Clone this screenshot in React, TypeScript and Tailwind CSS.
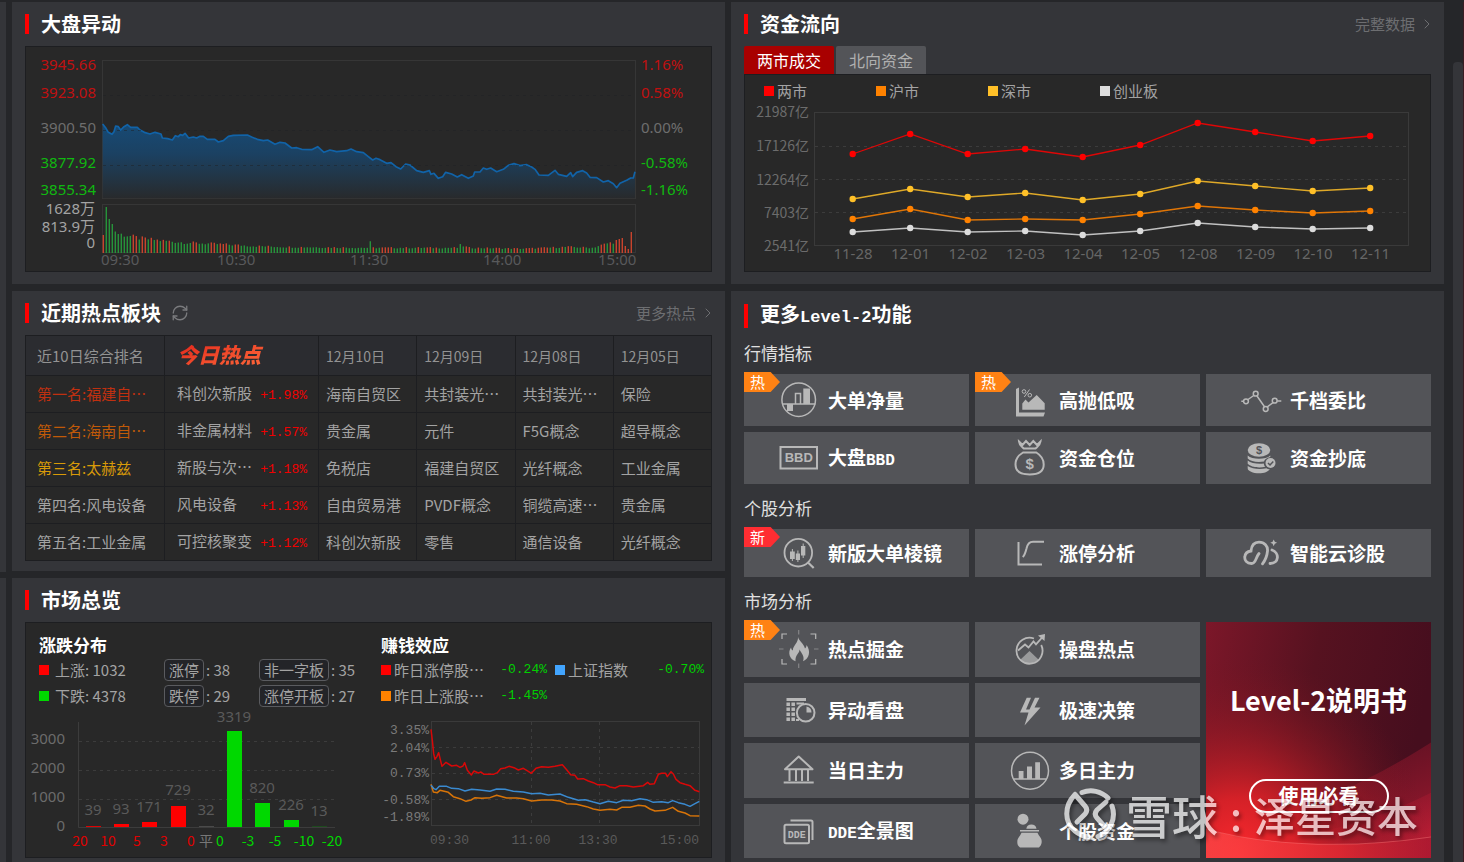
import { ReactNode } from "react";
import { ChevronRight, RefreshCw } from "lucide-react";

const NUM = "[font-family:'Noto_Sans','Noto_Sans_CJK_SC',sans-serif]";
const MONO = "[font-family:'Liberation_Mono','Noto_Sans_CJK_SC',monospace]";

// index curve, stored at triple resolution
const indexCurve =
  "308,372 318,385 325,397 336,403 342,395 347,378 355,380 362,390 372,380 382,374 392,382 412,382 420,390 433,397 450,402 465,397 483,402 487,414 503,416 517,420 526,407 535,410 541,404 548,406 555,400 566,414 580,411 590,414 600,409 610,409 622,418 645,418 655,426 670,422 685,409 700,406 742,405 755,411 772,418 790,422 803,420 825,433 840,427 855,429 875,444 890,443 905,448 935,449 953,440 972,457 990,450 1010,455 1040,452 1053,447 1070,455 1090,458 1105,470 1118,480 1128,475 1140,479 1160,490 1173,488 1188,500 1202,507 1217,492 1230,495 1250,512 1270,517 1288,512 1293,523 1302,520 1315,535 1328,530 1337,517 1355,522 1372,531 1385,524 1405,535 1420,528 1424,516 1440,516 1450,504 1460,508 1472,504 1490,515 1510,508 1525,496 1542,491 1560,497 1580,494 1595,501 1605,508 1617,525 1645,526 1665,511 1675,523 1700,529 1712,518 1718,530 1730,517 1748,512 1760,519 1770,532 1790,533 1810,546 1825,542 1840,551 1850,563 1860,550 1880,541 1892,534 1900,534 1905,515";

const redCurve =
  "213,472 217,505 221,545 225,562 231,553 236,542 241,563 246,583 258,571 275,582 290,580 300,586 309,582 314,572 322,595 334,609 342,597 355,603 363,600 372,607 400,607 412,602 422,590 435,588 447,583 462,587 475,594 490,589 505,598 514,604 528,589 545,584 565,586 585,583 607,578 620,593 632,608 645,610 653,621 670,620 685,627 700,632 712,638 735,638 750,645 765,648 780,641 800,641 820,645 850,641 863,631 870,637 883,635 895,607 905,604 917,604 922,614 933,599 940,606 948,622 960,632 975,637 990,641 1005,655 1018,659";
const blueCurve =
  "213,640 222,650 228,653 238,643 260,643 275,649 295,650 315,657 335,652 360,654 390,658 410,651 435,652 460,658 490,660 515,665 540,664 565,669 600,666 625,676 655,685 675,683 700,690 720,695 745,688 770,692 790,685 815,686 840,680 860,683 880,691 905,689 925,692 938,686 955,692 975,697 990,703 1005,695 1018,688";
const orangeCurve =
  "213,637 220,660 232,662 240,655 265,661 280,674 300,680 318,688 333,684 345,677 365,679 390,677 410,670 440,678 470,678 490,680 515,687 545,684 575,684 600,687 620,695 650,697 680,704 700,711 720,715 750,712 770,714 785,706 810,706 835,700 855,702 870,711 885,717 915,715 938,706 955,718 975,723 990,731 1018,732";

// volume envelope: [bar index, height]
const envelope = [
  [0, 18], [1, 46], [2, 34], [3, 29], [5, 22], [8, 20], [12, 17], [20, 14], [27, 12],
  [40, 10], [50, 8], [60, 7], [88, 6], [89, 12], [90, 6], [118, 6], [119, 9], [122, 6],
  [140, 5], [155, 7], [163, 6], [168, 11], [171, 13], [173, 15], [174, 7], [175, 4], [176, 21],
];

const volumes = Array.from({ length: 177 }, (_, i) => {
  const next = envelope.findIndex(([x]) => x >= i);
  const [x1, h1] = envelope[next];
  const [x0, h0] = envelope[Math.max(next - 1, 0)];
  const base = x1 === x0 ? h1 : h0 + ((h1 - h0) * (i - x0)) / (x1 - x0);
  const noise = Math.sin(i * 12.9898) * 43758.5453;
  const r = noise - Math.floor(noise);
  const up = i === 0 || i > 171 || (i > 6 && i !== 89 && i !== 119 && r > 0.58);
  return { h: base * (i < 4 || i > 170 ? 1 : 0.75 + r * 0.25), up };
});

const flowDates = ["11-28", "12-01", "12-02", "12-03", "12-04", "12-05", "12-08", "12-09", "12-10", "12-11"];
const flowSeries = [
  { name: "两市", color: "#ff0000", dot: "bg-[#ff0000]", y: [51, 31, 51, 46, 54, 42, 20, 29, 38, 33] },
  { name: "沪市", color: "#ff8200", dot: "bg-[#ff8200]", y: [116, 106, 117, 116, 117, 111, 103, 107, 110, 108] },
  { name: "深市", color: "#ffc028", dot: "bg-[#ffc028]", y: [96, 86, 94, 90, 97, 91, 78, 83, 88, 85] },
  { name: "创业板", color: "#dcdcdc", dot: "bg-[#dcdcdc]", y: [129, 125, 129, 128, 132, 128, 120, 124, 126, 125] },
];

const hotRows = [
  { rank: "第一名:福建自…", tone: "text-[#c03010]", name: "科创次新股", pct: "+1.98%", days: ["海南自贸区", "共封装光…", "共封装光…", "保险"] },
  { rank: "第二名:海南自…", tone: "text-[#c05a08]", name: "非金属材料", pct: "+1.57%", days: ["贵金属", "元件", "F5G概念", "超导概念"] },
  { rank: "第三名:太赫兹", tone: "text-[#d89a08]", name: "新股与次…", pct: "+1.18%", days: ["免税店", "福建自贸区", "光纤概念", "工业金属"] },
  { rank: "第四名:风电设备", tone: "", name: "风电设备", pct: "+1.13%", days: ["自由贸易港", "PVDF概念", "铜缆高速…", "贵金属"] },
  { rank: "第五名:工业金属", tone: "", name: "可控核聚变", pct: "+1.12%", days: ["科创次新股", "零售", "通信设备", "光纤概念"] },
];

const bars = [
  { v: 39, x: 67, h: 1, label: 103, fill: "#e00000" },
  { v: 93, x: 95, h: 3, label: 102, fill: "#ff0000" },
  { v: 171, x: 123, h: 5, label: 100, fill: "#ff0000" },
  { v: 729, x: 152, h: 21, label: 83, fill: "#ff0000" },
  { v: 32, x: 180, h: 1, label: 103, fill: "#4a4a4a" },
  { v: 3319, x: 208, h: 96, label: 10, fill: "#00d800" },
  { v: 820, x: 236, h: 24, label: 81, fill: "#00d800" },
  { v: 226, x: 265, h: 7, label: 98, fill: "#00d800" },
  { v: 13, x: 293, h: 1, label: 104, fill: "#1d4a1d" },
];
const barTicks: [string, number, string][] = [
  ["20", 54, "#e00000"], ["10", 82, "#e00000"], ["5", 111, "#e00000"], ["3", 138, "#e00000"],
  ["0", 165, "#e00000"], ["平", 180, "#777777"], ["0", 194, "#00d800"], ["-3", 222, "#00d800"],
  ["-5", 249, "#00d800"], ["-10", 278, "#00d800"], ["-20", 306, "#00d800"],
];

export default function App() {
  return (
    <main className="relative flex h-screen gap-1.5 overflow-hidden bg-[#252629] pt-0.5 text-[#a3a3a3] [font-family:'Noto_Sans_CJK_SC',sans-serif]">
      <div className="flex w-1.5 shrink-0 flex-col gap-1.5">
        <div className="h-[570px] bg-[#343539]" />
        <div className="flex-1 bg-[#343539]" />
      </div>
      <div className="grid flex-1 grid-cols-2 gap-1.5">
        <div className="flex min-w-0 flex-col gap-[7px]">
          <MarketMove />
          <HotSectors />
          <Overview />
        </div>
        <div className="flex min-w-0 flex-col gap-[7px]">
          <MoneyFlow />
          <LevelTwo />
        </div>
      </div>
      {/* scroll rail */}
      <div className="-ml-1.5 flex w-5 shrink-0 border-r border-[#3a1c22] pt-[60px] pl-[9px]">
        <div className="w-full rounded-t bg-[#343539]" />
      </div>
      <Watermark />
    </main>
  );
}

function Panel({ children, className = "pb-3" }: { children: ReactNode; className?: string }) {
  return <section className={`flex flex-col bg-[#343539] px-[13px] ${className}`}>{children}</section>;
}

function PanelHeader({ title, extra, link, tall }: { title: ReactNode; extra?: ReactNode; link?: string; tall?: boolean }) {
  return (
    <header className={`flex shrink-0 items-center ${tall ? "h-[50px]" : "h-11"}`}>
      <span className={`w-1 bg-[#ff0000] ${tall ? "h-6" : "h-5"}`} />
      <h2 className="ml-3 text-[20px] leading-6 font-bold text-white">{title}</h2>
      {extra}
      {link && (
        <a href="#" className="ml-auto flex items-center gap-1 text-[15px] leading-5 text-[#6d6e71]">
          {link}
          <ChevronRight size={16} strokeWidth={1.5} className="-mr-1" />
        </a>
      )}
    </header>
  );
}

function MarketMove() {
  const left: [string, number, string][] = [
    ["3945.66", 18, "#c01010"], ["3923.08", 46, "#c01010"], ["3900.50", 81, "#6e6e6e"],
    ["3877.92", 116, "#10b810"], ["3855.34", 143, "#10b810"],
  ];
  const right = ["1.16%", "0.58%", "0.00%", "-0.58%", "-1.16%"];
  const times: [string, number][] = [["09:30", 75], ["10:30", 191], ["11:30", 324], ["14:00", 457], ["15:00", 572]];
  return (
    <Panel>
      <PanelHeader title="大盘异动" />
      <div className="border border-[#1d1e21] bg-[#282828]">
        <svg viewBox="0 0 685 224" className={`block w-full text-[15px] ${NUM}`}>
          <defs>
            <linearGradient id="indexFill" x1="0" y1="0" x2="0" y2="1">
              <stop offset="0" stopColor="#174a75" />
              <stop offset="0.4" stopColor="#1b4162" />
              <stop offset="1" stopColor="#282a2c" />
            </linearGradient>
          </defs>
          <g fill="none" stroke="#363636">
            <rect x="76.5" y="13.5" width="533" height="138" />
            <rect x="76.5" y="157.5" width="533" height="48" />
          </g>
          <g transform="scale(0.33333) translate(-78 -141)">
            <polygon points={`308,595 ${indexCurve} 1905,595`} fill="url(#indexFill)" />
            <polyline points={indexCurve} fill="none" stroke="#1163a8" strokeWidth="5" strokeLinejoin="round" />
          </g>
          <g stroke="#1f2225" strokeDasharray="3 4">
            <path d="M77 48.5H609M77 83.5H609M77 118.5H609" opacity="0.5" />
          </g>
          {volumes.map((b, i) => (
            <rect key={i} x={76.6 + i * 3} y={206 - b.h} width={1.4} height={b.h} fill={b.up ? "#c8432c" : "#26933a"} />
          ))}
          {left.map(([t, y, c], i) => (
            <g key={t} fill={c}>
              <text x="70" y={y + 5} textAnchor="end">{t}</text>
              <text x="615" y={y + 5}>{right[i]}</text>
            </g>
          ))}
          <g fill="#a3a3a3" textAnchor="end">
            <text x="69" y="167">1628万</text>
            <text x="69" y="185">813.9万</text>
            <text x="69" y="201">0</text>
          </g>
          {times.map(([t, x]) => (
            <text key={t} x={x} y="218" fill="#58595b">{t}</text>
          ))}
        </svg>
      </div>
    </Panel>
  );
}

function MoneyFlow() {
  const axis: [string, number][] = [["21987亿", 9], ["17126亿", 43], ["12264亿", 77], ["7403亿", 110], ["2541亿", 143]];
  return (
    <Panel>
      <PanelHeader title="资金流向" link="完整数据" />
      <div className="flex gap-0.5">
        <button className="h-7 w-[90px] rounded-t-xs bg-[#a80000] text-[16px] text-white">两市成交</button>
        <button className="h-7 w-[90px] rounded-t-xs bg-[#535458] text-[16px] text-[#b0b0b0]">北向资金</button>
      </div>
      <div className="border border-[#1d1e21] bg-[#282828]">
        <ul className="mt-1 flex h-6 items-center pl-[19px] text-[15px]">
          {flowSeries.map((s) => (
            <li key={s.name} className="flex w-28 items-center gap-[3px]">
              <span className={`size-2.5 ${s.dot}`} />
              {s.name}
            </li>
          ))}
        </ul>
        <svg viewBox="0 0 685 168" className="block w-full overflow-visible">
          <rect x="69.5" y="9.5" width="594" height="133" fill="none" stroke="#3a3a3a" />
          <path d="M70 43.5H663M70 76.5H663M70 109.5H663" stroke="#3c3c3c" strokeDasharray="3 4" />
          <g fill="#6c6c6c" className="text-[14px]" textAnchor="end">
            {axis.map(([t, y]) => (
              <text key={t} x="64" y={y + 5}>{t}</text>
            ))}
          </g>
          <g fill="#666666" className={`text-[15px] ${NUM}`} textAnchor="middle">
            {flowDates.map((d, i) => (
              <text key={d} x={108 + i * 57.5} y="156">{d}</text>
            ))}
          </g>
          {flowSeries.map((s) => (
            <g key={s.name} fill={s.color}>
              <polyline
                points={s.y.map((y, i) => `${107.7 + i * 57.5},${y}`).join(" ")}
                fill="none"
                stroke={s.color}
                strokeWidth="1.3"
                opacity="0.85"
              />
              {s.y.map((y, i) => (
                <circle key={i} cx={107.7 + i * 57.5} cy={y} r="3.2" />
              ))}
            </g>
          ))}
        </svg>
      </div>
    </Panel>
  );
}

function HotSectors() {
  const line = "border border-[#1d1e21]";
  return (
    <Panel className="pb-2.5">
      <PanelHeader
        title="近期热点板块"
        link="更多热点"
        extra={
          <button aria-label="刷新" className="ml-2.5 text-[#7a7b7e]">
            <RefreshCw size={18} strokeWidth={1.75} />
          </button>
        }
      />
      <table className="w-full table-fixed border-collapse text-[15px] leading-5">
        <colgroup>
          <col className="w-[139px]" />
          <col className="w-[154px]" />
          <col span={4} />
        </colgroup>
        <thead>
          <tr className="h-10 bg-[#2b2c30] text-left text-[#939393]">
            <th className={`pl-[11px] font-normal whitespace-nowrap ${line}`}>近10日综合排名</th>
            <th className={`pl-3 ${line}`}>
              <span className="bg-gradient-to-br from-[#e01818] to-[#ff6a3c] bg-clip-text pr-1 text-[21px] font-black text-transparent italic">
                今日热点
              </span>
            </th>
            {["12月10日", "12月09日", "12月08日", "12月05日"].map((d) => (
              <th key={d} className={`pl-[7px] text-[14px] font-normal ${line}`}>{d}</th>
            ))}
          </tr>
        </thead>
        <tbody>
          {hotRows.map((r) => (
            <tr key={r.rank} className="h-[37px] bg-[#282828] whitespace-nowrap">
              <td className={`pl-[11px] ${r.tone} ${line}`}>{r.rank}</td>
              <td className={`pr-[11px] pl-3 ${line}`}>
                <div className="flex items-baseline justify-between">
                  {r.name}
                  <span className={`text-[13px] text-[#f00000] ${MONO}`}>{r.pct}</span>
                </div>
              </td>
              {r.days.map((d, i) => (
                <td key={i} className={`pl-[7px] ${line}`}>{d}</td>
              ))}
            </tr>
          ))}
        </tbody>
      </table>
    </Panel>
  );
}

function Boxed({ label, value }: { label: string; value: number }) {
  return (
    <div className="flex h-[22px] items-center gap-0.5">
      <span className="rounded-sm border border-[#5a5b5f] bg-[#232428] px-1 leading-5">{label}</span>: {value}
    </div>
  );
}

function Effect({ dot, name, pct }: { dot: string; name: string; pct: string }) {
  return (
    <div className="flex h-[22px] items-center gap-[3px] whitespace-nowrap">
      <span className={`size-2.5 ${dot}`} />
      {name}
      <span className={`ml-auto text-[13px] text-[#00d000] ${MONO}`}>{pct}</span>
    </div>
  );
}

function Overview() {
  const pctAxis: [string, number][] = [["3.35%", 23], ["2.04%", 41], ["0.73%", 66], ["-0.58%", 93], ["-1.89%", 110]];
  return (
    <Panel className="flex-1 pb-1">
      <PanelHeader title="市场总览" />
      <div className="grid flex-1 grid-cols-[344fr_341fr] border border-[#1d1e21] bg-[#282828] text-[15px]">
        <div className="pt-3">
          <h3 className="pl-[13px] text-[17px] leading-5 font-bold text-white">涨跌分布</h3>
          <div className="mt-1 grid grid-cols-[125px_95px_auto] gap-y-1 pl-[13px]">
            <div className="flex h-[22px] items-center gap-1.5"><span className="size-2.5 bg-[#ff0000]" />上涨: 1032</div>
            <Boxed label="涨停" value={38} />
            <Boxed label="非一字板" value={35} />
            <div className="flex h-[22px] items-center gap-1.5"><span className="size-2.5 bg-[#00d800]" />下跌: 4378</div>
            <Boxed label="跌停" value={29} />
            <Boxed label="涨停开板" value={27} />
          </div>
          <svg viewBox="0 0 344 150" className={`block w-full text-[15px] ${NUM}`}>
            <path d="M53 34.5H309M53 63.5H309M53 92.5H309" stroke="#3c3c3c" strokeDasharray="3 4" />
            <path d="M52.5 15V120.5H309" fill="none" stroke="#3c3c3c" />
            {[3000, 2000, 1000, 0].map((n, i) => (
              <text key={n} x="39" y={37 + i * 29} fill="#6c6c6c" textAnchor="end">{n}</text>
            ))}
            {bars.map((b) => (
              <g key={b.v}>
                <rect x={b.x - 7} y={120 - b.h} width="15" height={b.h} fill={b.fill} />
                <text x={b.x} y={b.label + 5} fill="#5a5a5a" textAnchor="middle">{b.v}</text>
              </g>
            ))}
            {barTicks.map(([t, x, c], i) => (
              <text key={i} x={x} y="139" fill={c} textAnchor="middle" className="text-[14px] [font-family:'Noto_Sans_CJK_SC',sans-serif]">
                {t}
              </text>
            ))}
          </svg>
        </div>
        <div className="pt-3">
          <h3 className="pl-[11px] text-[17px] leading-5 font-bold text-white">赚钱效应</h3>
          <div className="mt-1 grid grid-cols-[166px_149px] gap-x-2 gap-y-1 pl-[11px]">
            <Effect dot="bg-[#ff0000]" name="昨日涨停股…" pct="-0.24%" />
            <Effect dot="bg-[#42a5ff]" name="上证指数" pct="-0.70%" />
            <Effect dot="bg-[#ff8200]" name="昨日上涨股…" pct="-1.45%" />
          </div>
          <svg viewBox="0 0 341 150" className={`block w-full text-[13px] ${MONO}`}>
            <rect x="61.5" y="14.5" width="268" height="104" fill="none" stroke="#3a3a3a" />
            <path d="M62 40.5H329M62 66.5H329M62 92.5H329M161.5 15V118M229.5 15V118" stroke="#3c3c3c" strokeDasharray="3 4" />
            <g transform="scale(0.33333) translate(-30 -405)" fill="none" strokeWidth="4.5" strokeLinejoin="round">
              <polyline points={orangeCurve} stroke="#d87408" />
              <polyline points={blueCurve} stroke="#3a8ad0" />
              <polyline points={redCurve} stroke="#d80808" />
            </g>
            {pctAxis.map(([t, y]) => (
              <text key={t} x="59" y={y + 4} fill="#7a7a7a" textAnchor="end">{t}</text>
            ))}
            <g fill="#5a5a5a">
              <text x="60" y="137">09:30</text>
              <text x="161" y="137" textAnchor="middle">11:00</text>
              <text x="228" y="137" textAnchor="middle">13:30</text>
              <text x="329" y="137" textAnchor="end">15:00</text>
            </g>
          </svg>
        </div>
      </div>
    </Panel>
  );
}

function Icon({ children }: { children: ReactNode }) {
  return (
    <svg viewBox="0 0 40 40" className="size-10 shrink-0 overflow-visible" fill="none" stroke="#b8b8b8" strokeWidth="1.5" aria-hidden="true">
      {children}
    </svg>
  );
}

const solid = { fill: "#b8b8b8", stroke: "none" };

const icons: Record<string, ReactNode> = {
  netVolume: (
    <>
      <circle cx="20.7" cy="19.7" r="16.8" />
      <path d="M4 24H37.5M17.5 24V13.5H22.5V24" />
      <path {...solid} d="M25.3 8.5H32V24H25.3zM9 24H15V31H9z" />
    </>
  ),
  areaChart: (
    <>
      <path {...solid} d="M7 9l3-1.5V32.5H36L34.5 36.5H7z" />
      <path {...solid} d="M13.3 29.8V23.5L16.5 19.5 19.5 22.5 27.7 15 35.7 23.3V29.8z" />
      <circle cx="15" cy="11.5" r="1.8" strokeWidth="1" />
      <circle cx="20.8" cy="15.2" r="1.8" strokeWidth="1" />
      <path d="M20.5 9.5L15.3 17" strokeWidth="1" />
    </>
  ),
  nodes: (
    <>
      <path d="M1.3 21.3H3.5M8 19.5L13.8 15.5M17 16L24.5 26.8M27.3 26.9L33 22.6M37.2 21H41.3" />
      <circle cx="6" cy="21.3" r="2.4" />
      <circle cx="15.7" cy="13.7" r="2.4" />
      <circle cx="25.7" cy="29" r="2.4" />
      <circle cx="34.7" cy="20.7" r="2.4" />
    </>
  ),
  bbd: (
    <>
      <rect x="2.5" y="9" width="36.5" height="21.5" strokeWidth="2" />
      <text x="20.8" y="24.2" textAnchor="middle" {...solid} className="text-[13px] font-bold [font-family:'Liberation_Sans',sans-serif]">BBD</text>
    </>
  ),
  moneyBag: (
    <>
      <path strokeWidth="2" d="M10 3.5l3.5 3.5L17 3l3.7 4L24.3 3 28 7l3.5-3.5C31 7.5 28.5 8.5 26.5 10.5H14.8C12.8 8.5 10.3 7.5 10 3.5z" />
      <path strokeWidth="2" d="M14 14.5H27.3C31.5 17 34.7 21.5 34.7 26.5 34.7 33.5 29.5 36.5 20.7 36.5S6.5 33.5 6.5 26.5C6.5 21.5 9.8 17 14 14.5z" />
      <text x="20.7" y="31" textAnchor="middle" {...solid} className="text-[15px] [font-family:'Liberation_Sans',sans-serif]">$</text>
    </>
  ),
  coins: (
    <>
      <ellipse cx="19" cy="12" rx="11.3" ry="6.7" {...solid} />
      <path {...solid} d="M7.7 17.5C12 21.8 26 21.8 30.3 17.5V19C27 19.5 24.5 21.5 24 23.5 17 24.5 10.5 23.5 7.7 20.5zM7.7 22.5C11 25.3 18 26.3 23.8 25.5 24 27 24.5 28 25.3 28.8 18 30.5 10.5 28.8 7.7 25.8zM7.7 28C12 31 20 31.8 26.5 30.2 27.5 31 28.5 31.2 29.8 31.2 28.5 33.5 24 35.3 19 35.3 13 35.3 7.7 33 7.7 30.5z" />
      <circle cx="30.5" cy="25" r="5" {...solid} />
      <path stroke="#535458" d="M28 25l2 2 3.3-3.5" />
      <text x="19" y="16" textAnchor="middle" fill="#535458" stroke="none" className="text-[11px] font-bold [font-family:'Liberation_Sans',sans-serif]">$</text>
    </>
  ),
  candleSearch: (
    <>
      <circle cx="20.3" cy="19.7" r="13.8" strokeWidth="1.8" />
      <path strokeWidth="2.2" d="M30 29.5L35.7 35" />
      <path {...solid} d="M12 18.5H16.8V26H12zM17.8 20.5H22V27H17.8zM23 13H27.3V22.5H23z" />
      <path strokeWidth="1" d="M14.4 16V28M19.9 17.5V29M25.2 10.5V25" />
    </>
  ),
  limitUp: (
    <>
      <path strokeWidth="2" d="M9.5 9V31.5H33" />
      <path strokeWidth="2" d="M13.7 24C15.5 22.5 16.5 19.5 17.5 15.5 18.5 11 20.5 8.8 24 8.8H35" />
    </>
  ),
  cloud: (
    <>
      <path strokeWidth="2.8" strokeLinecap="round" d="M11.5 30.5C6.5 30.5 4.5 27 4.8 24 5 21 7.5 18.5 11 18 11.5 12.5 14.5 9.2 19 9.2 24.5 9.2 28 13 27.5 18 27 23.5 25.5 27 22.5 30.8M11.5 30.5C16 30.5 15.5 24.5 19 20.5M32 17C39.5 19.5 39.5 30.5 30 30.5" />
      <path {...solid} d="M33.7 6.5l1.1 2.3 2.3 1-2.3 1-1.1 2.4-1.1-2.4-2.3-1 2.3-1z" />
    </>
  ),
  flame: (
    <>
      <path strokeWidth="1.2" d="M4 10V5H9M32.5 5H37.7V10M37.7 30V35H32.5M9 35H4V30" />
      <path strokeWidth="1.2" opacity="0.5" d="M20.7 1V5.5M20.7 34.5V39M1 20H5.5M36 20H40.5" />
      <path {...solid} d="M20 8C21 12 25.5 14 27 19.5 28 18.5 28.5 17.5 28.5 16 33 22 31.5 29.5 25 32.3 27 27.5 23.5 24.5 21.5 20.5 21.5 24.5 17 26 17.5 32.3 11.5 30 9.5 23.5 13 18.5 13.3 20 13.8 21 14.8 21.5 15 16 20.5 14 20 8z" />
    </>
  ),
  trendCircle: (
    <>
      <path strokeWidth="1.8" d="M25 9.5A13 13 0 1 0 32.2 16" />
      <path strokeWidth="1.8" d="M9 21.5L16 15.5 19.5 18.5 24.5 12.5 27 15.3 34 7.5" />
      <path {...solid} d="M29 6.5L36 5 35.5 12z" />
      <path {...solid} d="M20.5 22L30 31C25 35.5 15.5 35.5 11 31z" opacity="0.7" />
    </>
  ),
  gridPie: (
    <>
      <path strokeWidth="3" d="M8.5 9.5H28" />
      <path strokeWidth="3.5" strokeDasharray="3.5 1.5" d="M10.2 12.5V31.5M15.2 12.5V31.5" />
      <path strokeWidth="2" d="M18.5 13.5H26M18 30H21" />
      <circle cx="27.7" cy="22.8" r="8.8" fill="#535458" strokeWidth="2" />
      <path {...solid} d="M28.5 16.5A6 6 0 0 1 33.5 22.5H28.5z" />
    </>
  ),
  bolt: <path {...solid} d="M17.7 7.7H22L17 19.5H20.500L26 7.700H30.500L25.500 17.500H31.500L15.500 35.500 19.500 22.500H11z" />,
  bank: (
    <path strokeWidth="2" strokeLinejoin="round" d="M7 19.3L20.7 6.5 34.5 19.3zM11.5 20V31M18 20V31M24 20V31M30 20V31M5.7 32.5H35.7" />
  ),
  barCircle: (
    <>
      <circle cx="21" cy="20.7" r="18.5" />
      <path {...solid} d="M9.7 21H14.5V29H9.7zM18 16.5H23V29H18zM26.2 12.3H31V29H26.2z" />
      <path d="M4.5 29H37.5" />
    </>
  ),
  dde: (
    <>
      <rect x="6.5" y="13.8" width="24.5" height="18.5" rx="1.5" strokeWidth="2" />
      <path strokeWidth="2" d="M12.5 9.5H33Q34.5 9.5 34.5 11V29" />
      <text x="18.7" y="27" textAnchor="middle" {...solid} className="text-[10px] font-bold [font-family:'Liberation_Mono',monospace]">DDE</text>
    </>
  ),
  fund: (
    <>
      <circle cx="14" cy="8.2" r="5.5" {...solid} />
      <path {...solid} d="M17.3 17.8A5.2 5.2 0 0 1 27.5 17.8zM11 19H30V20.5H11zM12.5 21.8H28.5C30 25.5 33 27 32.7 31 32.5 33.5 31.5 35 30 36.5H11C9 35 8.3 33.5 8.3 31 8.3 27 11 25.5 12.5 21.8z" />
    </>
  ),
};

type TileProps = { icon: string; label: string; badge?: "热" | "新" };

function Tile({ icon, label, badge }: TileProps) {
  return (
    <button className="relative flex h-full w-full items-center gap-2.5 bg-[#535458] pl-[34px] text-left text-[19px] font-bold whitespace-nowrap text-white">
      {badge && (
        <span
          className={`absolute -top-0.5 left-0 h-5 w-9 pl-1.5 text-[15px] leading-5 font-normal [clip-path:polygon(0_0,74%_0,100%_50%,74%_100%,0_100%)] ${
            badge === "热" ? "bg-[#ff8214]" : "bg-[#ff2d32]"
          }`}
        >
          {badge}
        </span>
      )}
      <Icon>{icons[icon]}</Icon>
      <span>
        {label.split(/([A-Z]+)/).map((part, i) =>
          i % 2 ? <span key={i} className={`text-[16px] ${MONO}`}>{part}</span> : part,
        )}
      </span>
    </button>
  );
}

const quotes: TileProps[] = [
  { icon: "netVolume", label: "大单净量", badge: "热" },
  { icon: "areaChart", label: "高抛低吸", badge: "热" },
  { icon: "nodes", label: "千档委比" },
  { icon: "bbd", label: "大盘BBD" },
  { icon: "moneyBag", label: "资金仓位" },
  { icon: "coins", label: "资金抄底" },
];
const stocks: TileProps[] = [
  { icon: "candleSearch", label: "新版大单棱镜", badge: "新" },
  { icon: "limitUp", label: "涨停分析" },
  { icon: "cloud", label: "智能云诊股" },
];
const market: TileProps[] = [
  { icon: "flame", label: "热点掘金", badge: "热" },
  { icon: "trendCircle", label: "操盘热点" },
  { icon: "gridPie", label: "异动看盘" },
  { icon: "bolt", label: "极速决策" },
  { icon: "bank", label: "当日主力" },
  { icon: "barCircle", label: "多日主力" },
  { icon: "dde", label: "DDE全景图" },
  { icon: "fund", label: "个股资金" },
];

function LevelTwo() {
  const heading = "mb-[9px] h-6 text-[17px] leading-6 text-[#e0e0e0]";
  return (
    <Panel className="flex-1 pb-1">
      <PanelHeader tall title={<>更多<span className={`text-[17px] ${MONO}`}>Level-2</span>功能</>} />
      <h3 className={heading}>行情指标</h3>
      <div className="grid auto-rows-[52px] grid-cols-3 gap-1.5">
        {quotes.map((t) => <Tile key={t.label} {...t} />)}
      </div>
      <h3 className={`mt-3 ${heading}`}>个股分析</h3>
      <div className="grid auto-rows-[48px] grid-cols-3 gap-1.5">
        {stocks.map((t) => <Tile key={t.label} {...t} />)}
      </div>
      <h3 className={`mt-3 ${heading}`}>市场分析</h3>
      <div className="grid flex-1 grid-cols-3 grid-rows-4 gap-1.5">
        <Manual />
        {market.map((t) => <Tile key={t.label} {...t} />)}
      </div>
    </Panel>
  );
}

function Manual() {
  return (
    <a
      href="#"
      className="relative col-start-3 row-span-4 row-start-1 flex flex-col items-center overflow-hidden bg-[#5a121f] pt-[58px] text-white"
    >
      <svg viewBox="0 0 225 235" preserveAspectRatio="none" className="absolute inset-0 h-full w-full" aria-hidden="true">
        <defs>
          <linearGradient id="manualBase" x1="0" y1="0" x2="1" y2="0.2">
            <stop offset="0" stopColor="#7c1729" />
            <stop offset="0.5" stopColor="#561220" />
            <stop offset="1" stopColor="#460e1e" />
          </linearGradient>
          <radialGradient id="manualGlow" cx="0.15" cy="1" r="0.85">
            <stop offset="0" stopColor="#ff2a2e" />
            <stop offset="0.3" stopColor="#e02228" stopOpacity="0.9" />
            <stop offset="0.65" stopColor="#a01a24" stopOpacity="0.5" />
            <stop offset="1" stopColor="#701520" stopOpacity="0" />
          </radialGradient>
          <linearGradient id="manualWave" x1="0" y1="0" x2="1" y2="0">
            <stop offset="0" stopColor="#ff4a4a" />
            <stop offset="0.6" stopColor="#e82c34" />
            <stop offset="1" stopColor="#a81830" />
          </linearGradient>
          <linearGradient id="manualFold" x1="0" y1="0" x2="0.6" y2="1">
            <stop offset="0" stopColor="#a01830" stopOpacity="0.1" />
            <stop offset="1" stopColor="#d02038" stopOpacity="0.6" />
          </linearGradient>
        </defs>
        <rect width="225" height="235" fill="url(#manualBase)" />
        <path d="M225 120C190 142 160 158 120 175L60 235H225z" fill="url(#manualFold)" />
        <path d="M225 170C190 188 150 202 100 212L60 235H225z" fill="url(#manualFold)" />
        <rect width="225" height="235" fill="url(#manualGlow)" />
        <path d="M0 206C50 220 130 228 225 214V235H0z" fill="url(#manualWave)" opacity="0.7" />
        <path d="M0 206C50 220 130 228 225 214" fill="none" stroke="#ff8080" opacity="0.4" />
      </svg>
      <strong className="relative text-[27px] leading-10 font-bold whitespace-nowrap">Level-2说明书</strong>
      <span className="relative mt-[59px] rounded-full border-2 border-white px-7 text-[20px] leading-[30px] font-bold">使用必看</span>
    </a>
  );
}

function Watermark() {
  return (
    <div className="pointer-events-none absolute right-[46px] bottom-[22px] flex items-center leading-none font-medium text-white opacity-70 [filter:drop-shadow(2px_3px_2px_rgba(0,0,0,0.6))]">
      <svg viewBox="0 0 52 52" className="mr-2.5 size-[52px]" fill="none" stroke="white" strokeWidth="5" strokeLinecap="round" aria-hidden="true">
        <path d="M18 4.5A24 24 0 0 1 44 10M48 18A24 24 0 0 1 34 48.5" />
        <path d="M11 6.5L21 18Q24.5 22 21 26L13 34M11 6.5C0 18 0 34 11 43Q17 48 24 49" />
        <path d="M42 14L33 22Q29.5 26 33 30L41 39" />
      </svg>
      <span className="text-[46px]">雪球</span>
      <span className="w-9 text-center text-[40px]">:</span>
      <span className="text-[41px]">泽星资本</span>
    </div>
  );
}
